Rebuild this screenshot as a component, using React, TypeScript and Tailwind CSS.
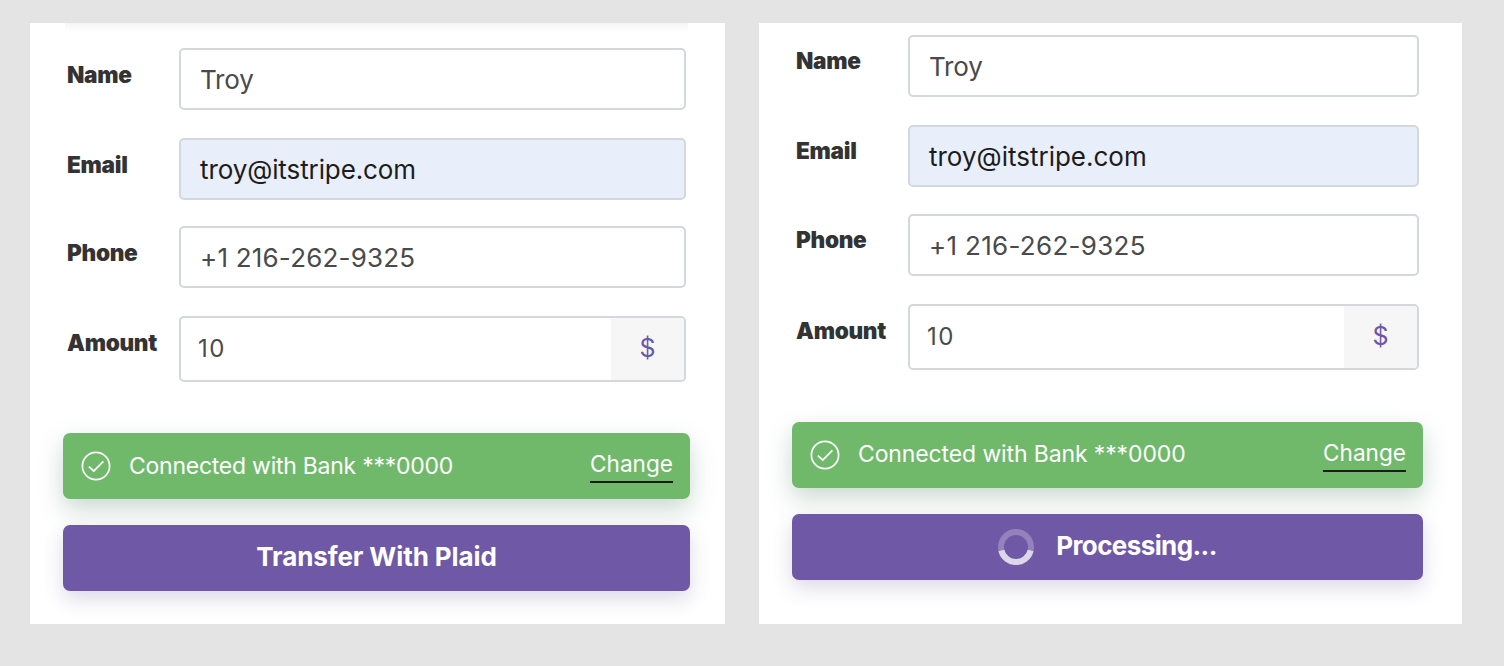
const body = "font-['Inter','Liberation_Sans',sans-serif]";
const labelText = "w-[112px] text-[22.6px] leading-[30px] font-black tracking-[-0.3px] text-[#333]";

function Field({
  label,
  value,
  filled,
  className = "",
  labelClass = "pt-[12px]",
  valueClass = "tracking-[-0.2px]",
}: {
  label: string;
  value: string;
  filled?: boolean;
  className?: string;
  labelClass?: string;
  valueClass?: string;
}) {
  return (
    <div className={`flex items-start ${className}`}>
      <div className={`${labelText} ${labelClass}`}>{label}</div>
      <div
        className={`flex h-[62px] flex-1 items-center rounded-[5px] border-2 border-[#d3d7de] px-[19px] text-[26px] ${valueClass} ${
          filled ? "bg-[#e8effb] text-[#1c1c1c]" : "bg-white text-[#4a4a4a]"
        }`}
      >
        {value}
      </div>
    </div>
  );
}

function AmountField() {
  return (
    <div className="flex items-start">
      <div className={`${labelText} pt-[12px]`}>Amount</div>
      <div className="flex h-[66px] flex-1 items-stretch overflow-hidden rounded-[5px] border-2 border-[#d3d7de] bg-white">
        <div className="flex flex-1 items-center pl-[17px] text-[24px] tracking-[1.5px] text-[#4a4a4a]">10</div>
        <div className="flex w-[73px] items-center justify-center bg-[#f6f6f7] text-[25px] text-[#6f57a8]">$</div>
      </div>
    </div>
  );
}

function CheckIcon() {
  return (
    <svg width="30" height="30" viewBox="0 0 30 30" fill="none" stroke="white" className="shrink-0">
      <circle cx="15" cy="15" r="13.6" strokeWidth="1.7" />
      <path d="M7.8 15.6 L12.8 20 L22.4 10.4" strokeWidth="1.7" />
    </svg>
  );
}

function Spinner() {
  return (
    <svg width="36" height="36" viewBox="0 0 36 36" fill="none" className="shrink-0">
      <circle cx="18" cy="18" r="15" stroke="white" strokeOpacity="0.25" strokeWidth="6" />
      <path d="M3.4 21.5 A15 15 0 0 0 32.6 21.5" stroke="white" strokeOpacity="0.68" strokeWidth="6" />
    </svg>
  );
}

function Panel({ processing }: { processing?: boolean }) {
  const labelClass = processing ? "pt-[11px]" : "pt-[12px]";
  return (
    <div className={`flex h-[601px] flex-col bg-white ${processing ? "w-[703px] pr-[39px] pl-[33px] pt-[12px]" : "w-[695px] pr-[35px] pl-[33px]"}`}>
      {!processing && <div className="mx-[2px] mb-[16px] h-[9px] bg-gradient-to-b from-[#f5f5f5] to-white" />}
      <div className="flex flex-col px-[4px]">
        <Field label="Name" value="Troy" labelClass={labelClass} />
        <Field
          label="Email"
          value="troy@itstripe.com"
          filled
          className="mt-[28px]"
          labelClass={labelClass}
          valueClass={processing ? "tracking-[0px]" : "tracking-[-0.1px]"}
        />
        <Field
          label="Phone"
          value="+1 216-262-9325"
          className={processing ? "mt-[27px]" : "mt-[26px]"}
          labelClass={labelClass}
          valueClass={processing ? "tracking-[0.3px]" : "tracking-[0.2px]"}
        />
        <div className="mt-[28px]">
          <AmountField />
        </div>
      </div>
      <div
        className={`flex h-[66px] items-center rounded-[7px] bg-[#70b96b] pr-[17px] pl-[18px] text-white shadow-[0_10px_24px_rgba(70,120,90,0.28)] ${
          processing ? "mt-[52px]" : "mt-[51px]"
        }`}
      >
        <CheckIcon />
        <span className={`ml-[18px] flex-1 text-[23px] ${processing ? "pb-[1px] tracking-[-0.12px]" : "tracking-[-0.25px]"}`}>
          Connected with Bank ***0000
        </span>
        <span className="border-b-2 border-[#1c1c1c] pb-[2px] text-[22.6px] leading-[30px]">Change</span>
      </div>
      <div
        className={`mt-[26px] flex h-[66px] items-center justify-center gap-[22px] rounded-[7px] bg-[#6f58a6] text-[26px] font-bold text-white shadow-[0_8px_20px_rgba(80,70,130,0.2)] ${
          processing ? "pb-[3px]" : "pb-[4px]"
        }`}
      >
        {processing ? (
          <>
            <span className="mt-[3px] flex">
              <Spinner />
            </span>
            <span className="tracking-[-0.6px]">Processing...</span>
          </>
        ) : (
          <span className="tracking-[-0.1px]">Transfer With Plaid</span>
        )}
      </div>
    </div>
  );
}

export default function App() {
  return (
    <div className={`flex h-[666px] w-[1504px] gap-[34px] bg-[#e4e4e4] pt-[23px] pl-[30px] ${body}`}>
      <Panel />
      <Panel processing />
    </div>
  );
}
